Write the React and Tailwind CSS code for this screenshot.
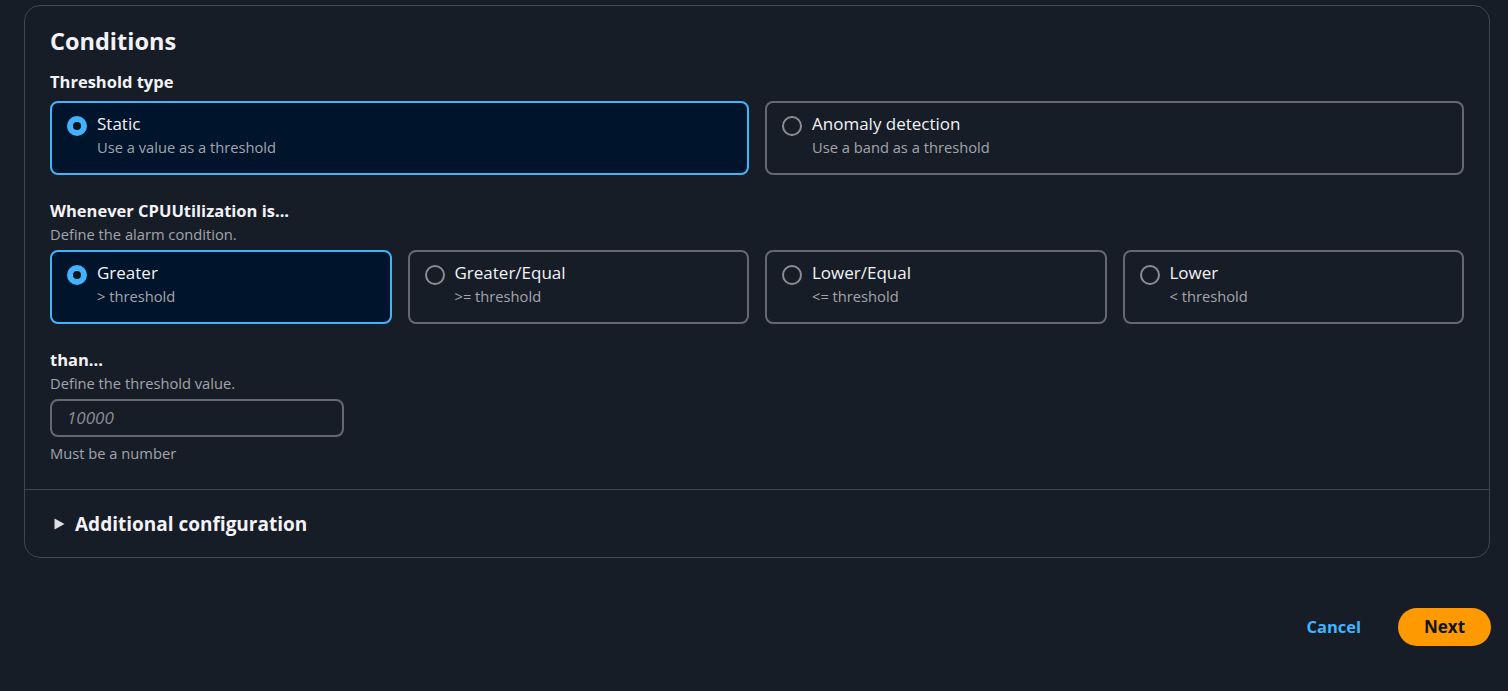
import React from "react";

const font = { fontFamily: '"Open Sans", "Noto Sans", Arial, sans-serif' };

function Radio({ checked }) {
  return checked ? (
    <div className="mt-[4px] flex h-[20px] w-[20px] shrink-0 items-center justify-center rounded-full bg-[#42b4ff]">
      <div className="h-[8px] w-[8px] rounded-full bg-[#0f141a]" />
    </div>
  ) : (
    <div className="mt-[4px] h-[20px] w-[20px] shrink-0 rounded-full border-2 border-[#8c8c94]" />
  );
}

function Tile({ checked, label, desc }) {
  return (
    <div
      className={
        "flex h-[74px] items-start gap-[10px] rounded-[8px] border-2 pl-[15px] pr-[14px] pt-[9px] " +
        (checked ? "border-[#42b4ff] bg-[#00142b]" : "border-[#656871] bg-[#161d26]")
      }
    >
      <Radio checked={checked} />
      <div className="flex flex-col">
        <span className="text-[17px] leading-[24px] text-[#f3f3f7]">{label}</span>
        <span className="text-[14.7px] leading-[22px] text-[#a4a4ad]">{desc}</span>
      </div>
    </div>
  );
}

export default function App() {
  return (
    <div className="min-h-screen bg-[#161d26] pl-[24px] pr-[18px] pt-[5px]" style={font}>
      <div className="rounded-[16px] border border-[#424650] bg-[#161d26]">
        <div className="px-[25px] pt-[19px]">
          <h2 className="text-[23.5px] font-bold leading-[32px] text-[#f3f3f7]">Conditions</h2>
          <div className="mt-[14px] text-[16.5px] font-bold leading-[22px] text-[#f3f3f7]">Threshold type</div>
          <div className="mt-[8px] grid grid-cols-2 gap-[16px]">
            <Tile checked label="Static" desc="Use a value as a threshold" />
            <Tile label="Anomaly detection" desc="Use a band as a threshold" />
          </div>

          <div className="mt-[25px] text-[16.5px] font-bold leading-[22px] text-[#f3f3f7]">Whenever CPUUtilization is...</div>
          <div className="mt-[1px] text-[14.7px] leading-[22px] text-[#a4a4ad]">Define the alarm condition.</div>
          <div className="mt-[5px] grid grid-cols-4 gap-[16px]">
            <Tile checked label="Greater" desc="> threshold" />
            <Tile label="Greater/Equal" desc=">= threshold" />
            <Tile label="Lower/Equal" desc="<= threshold" />
            <Tile label="Lower" desc="< threshold" />
          </div>

          <div className="mt-[25px] text-[16.5px] font-bold leading-[22px] text-[#f3f3f7]">than...</div>
          <div className="mt-[1px] text-[14.7px] leading-[22px] text-[#a4a4ad]">Define the threshold value.</div>
          <div className="mt-[5px] flex h-[38px] w-[294px] items-center rounded-[8px] border-2 border-[#656871] px-[15px]">
            <span className="text-[17px] italic text-[#8c8c94]">10000</span>
          </div>
          <div className="mt-[5px] pb-[25px] text-[14.7px] leading-[22px] text-[#a4a4ad]">Must be a number</div>
        </div>
        <div className="border-t border-[#424650]" />
        <div className="flex h-[67px] items-center gap-[10px] pl-[29px]">
          <svg width="11" height="12" viewBox="0 0 11 12">
            <path d="M0.5 0.5 L10.5 6 L0.5 11.5 Z" fill="#dedee3" />
          </svg>
          <span className="text-[19px] font-bold leading-[26px] text-[#f3f3f7]">Additional configuration</span>
        </div>
      </div>
      <div className="-mr-[1px] mt-[50px] flex items-center justify-end gap-[37px]">
        <span className="text-[16.5px] font-bold text-[#42b4ff]">Cancel</span>
        <span className="flex h-[38px] w-[93px] items-center justify-center rounded-full bg-[#ff9900] text-[17px] font-bold text-[#0f141a]">
          Next
        </span>
      </div>
    </div>
  );
}
